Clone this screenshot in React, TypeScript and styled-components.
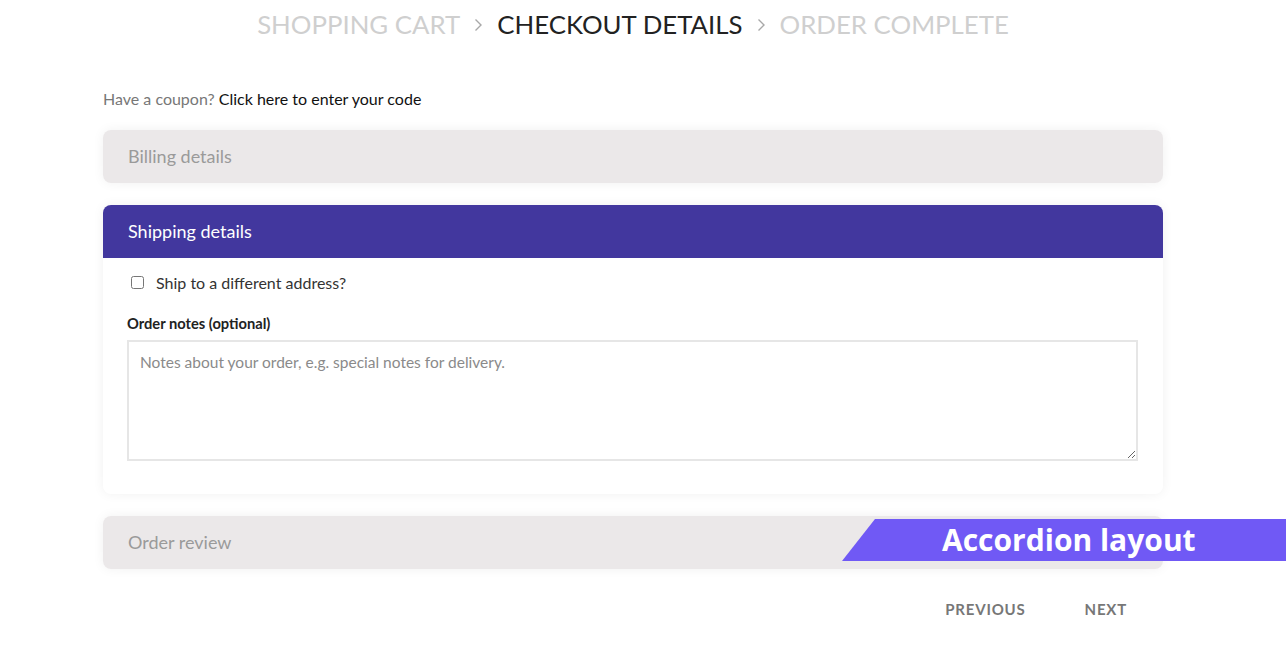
import styled, { createGlobalStyle } from "styled-components";

const GlobalStyle = createGlobalStyle`
  html, body {
    margin: 0;
    padding: 0;
    background: #fff;
    font-family: Lato, "Open Sans", sans-serif;
    overflow: hidden;
  }
  * {
    box-sizing: border-box;
  }
`;

function Chevron() {
  return (
    <ChevronIcon width="9" height="14" viewBox="0 0 9 14">
      <polyline points="1.5,1.5 7,7 1.5,12.5" fill="none" stroke="#a8a8a8" strokeWidth="1.4" />
    </ChevronIcon>
  );
}

function App() {
  return (
    <>
      <GlobalStyle />
      <Page>
        <Container>
          <Steps>
            <Step>Shopping Cart</Step>
            <Chevron />
            <Step $active>Checkout Details</Step>
            <Chevron />
            <Step>Order Complete</Step>
          </Steps>

          <Coupon>
            Have a coupon? <CouponLink href="#">Click here to enter your code</CouponLink>
          </Coupon>

          <Panel>
            <PanelHeader>Billing details</PanelHeader>
          </Panel>

          <Panel>
            <PanelHeader $open>Shipping details</PanelHeader>
            <PanelBody>
              <CheckRow>
                <input type="checkbox" />
                <span>Ship to a different address?</span>
              </CheckRow>
              <FieldLabel>Order notes (optional)</FieldLabel>
              <Notes placeholder="Notes about your order, e.g. special notes for delivery." />
            </PanelBody>
          </Panel>

          <Panel>
            <PanelHeader>Order review</PanelHeader>
          </Panel>

          <ButtonRow>
            <NavButton>Previous</NavButton>
            <NavButton>Next</NavButton>
          </ButtonRow>
        </Container>
        <Badge>
          <span>Accordion layout</span>
        </Badge>
      </Page>
    </>
  );
}

export default App;

const Page = styled.div`
  position: relative;
  width: 100%;
  height: 667px;
`;

const Container = styled.div`
  width: 1060px;
  margin-left: 103px;
  display: flex;
  flex-direction: column;
`;

const Steps = styled.nav`
  display: flex;
  justify-content: center;
  align-items: center;
  gap: 13px;
  padding-top: 5px;
  padding-bottom: 2px;
  height: 44px;
`;

const Step = styled.span<{ $active?: boolean }>`
  font-size: 25.8px;
  line-height: 34px;
  text-transform: uppercase;
  color: ${(p) => (p.$active ? "#222" : "#cfcfcf")};
`;

const ChevronIcon = styled.svg`
  display: block;
  margin: 2px 1px 0;
`;

const Coupon = styled.p`
  margin: 44px 0 0;
  font-size: 16px;
  line-height: 22px;
  color: #777;
`;

const CouponLink = styled.a`
  color: #111;
  text-decoration: none;
`;

const Panel = styled.section`
  margin-top: 20px;
  border-radius: 8px;
  overflow: hidden;
  background: #fff;
  box-shadow: 0 0 12px rgba(0, 0, 0, 0.06);
  & + & {
    margin-top: 22px;
  }
`;

const PanelHeader = styled.header<{ $open?: boolean }>`
  height: 53px;
  display: flex;
  align-items: center;
  padding: 0 25px 2px;
  font-size: 18px;
  background: ${(p) => (p.$open ? "#42379e" : "#ebe8e9")};
  color: ${(p) => (p.$open ? "#fff" : "#9a9a9a")};
`;

const PanelBody = styled.div`
  padding: 11px 25px 33px 24px;
  display: flex;
  flex-direction: column;
`;

const CheckRow = styled.label`
  display: flex;
  align-items: center;
  gap: 9px;
  font-size: 16px;
  color: #333;
  height: 26px;
  input {
    margin: 0 3px 0 4px;
    width: 13px;
    height: 13px;
  }
`;

const FieldLabel = styled.div`
  margin-top: 18px;
  font-size: 14.7px;
  font-weight: 700;
  color: #222;
  line-height: 20px;
`;

const Notes = styled.textarea`
  margin-top: 7px;
  width: 100%;
  height: 121px;
  border: 2px solid #e6e6e6;
  padding: 11px 11px;
  font-family: Lato, sans-serif;
  font-size: 15.5px;
  color: #333;
  resize: vertical;
  outline: none;
  &::placeholder {
    color: #8a8a8a;
  }
`;

const ButtonRow = styled.div`
  display: flex;
  justify-content: flex-end;
  gap: 23px;
  margin-top: 21px;
  padding-right: 18px;
`;

const NavButton = styled.button`
  background: none;
  border: none;
  padding: 10px 18px;
  font-family: Lato, sans-serif;
  font-size: 15px;
  font-weight: 700;
  letter-spacing: 0.8px;
  text-transform: uppercase;
  color: #777;
  cursor: pointer;
`;

const Badge = styled.div`
  position: absolute;
  top: 519px;
  right: 0;
  width: 444px;
  height: 42px;
  background: #7059f5;
  clip-path: polygon(33px 0, 100% 0, 100% 100%, 0 100%);
  display: flex;
  align-items: center;
  padding-left: 100px;
  span {
    font-family: "Open Sans", sans-serif;
    font-weight: 700;
    font-size: 30px;
    color: #fff;
    line-height: 42px;
  }
`;
